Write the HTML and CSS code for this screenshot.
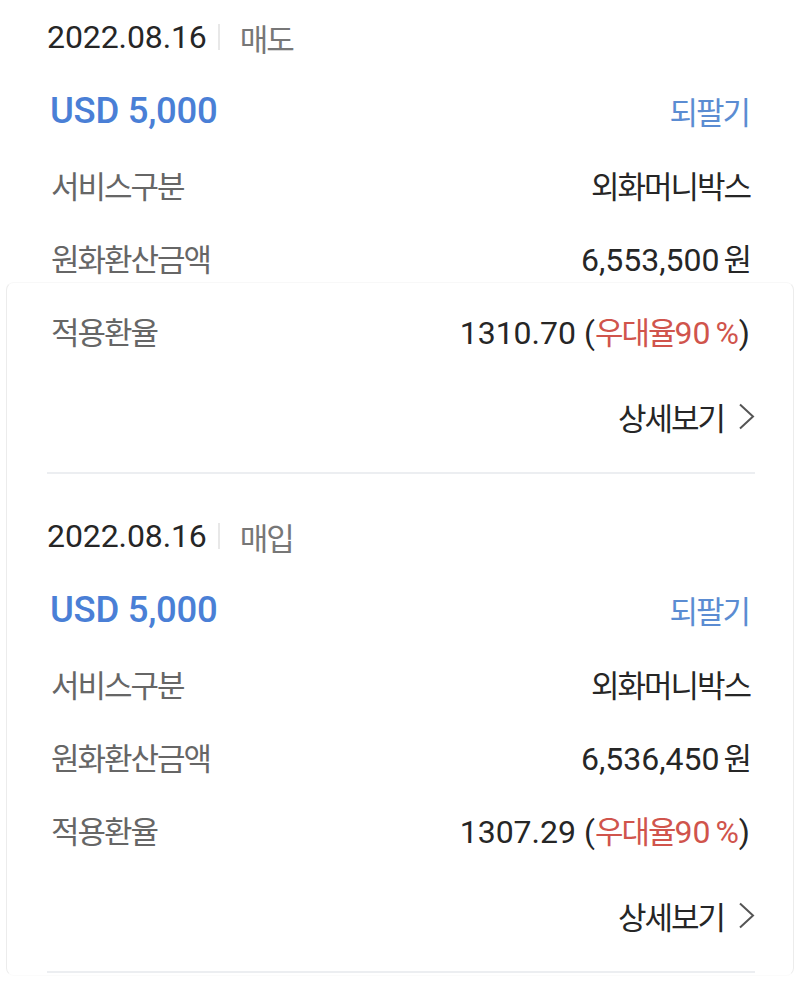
FILE: index.html
```html
<!DOCTYPE html>
<html lang="ko">
<head>
<meta charset="utf-8">
<link rel="stylesheet" href="styles.css">
</head>
<body>
<div class="page">
  <div class="frame"></div>
  <section class="item">
    <div class="head"><span class="date">2022.08.16</span><span class="sep"></span><span class="type ko">매도</span></div>
    <div class="amount-row"><span class="amount">USD 5,000</span><span class="resell ko">되팔기</span></div>
    <div class="row"><span class="label ko">서비스구분</span><span class="value ko">외화머니박스</span></div>
    <div class="row"><span class="label ko">원화환산금액</span><span class="value">6,553,500<span class="ko won">원</span></span></div>
    <div class="row"><span class="label ko">적용환율</span><span class="value">1310.70 (<span class="red"><span class="ko">우대율</span>90<span class="pct">%</span></span>)</span></div>
    <div class="more"><span class="ko">상세보기</span><svg class="chev" width="17" height="27" viewBox="0 0 17 27"><path d="M2 1.5 L15 13.5 L2 25.5" fill="none" stroke="#555" stroke-width="2"/></svg></div>
    <div class="divider"></div>
  </section>
  <section class="item">
    <div class="head"><span class="date">2022.08.16</span><span class="sep"></span><span class="type ko">매입</span></div>
    <div class="amount-row"><span class="amount">USD 5,000</span><span class="resell ko">되팔기</span></div>
    <div class="row"><span class="label ko">서비스구분</span><span class="value ko">외화머니박스</span></div>
    <div class="row"><span class="label ko">원화환산금액</span><span class="value">6,536,450<span class="ko won">원</span></span></div>
    <div class="row"><span class="label ko">적용환율</span><span class="value">1307.29 (<span class="red"><span class="ko">우대율</span>90<span class="pct">%</span></span>)</span></div>
    <div class="more"><span class="ko">상세보기</span><svg class="chev" width="17" height="27" viewBox="0 0 17 27"><path d="M2 1.5 L15 13.5 L2 25.5" fill="none" stroke="#555" stroke-width="2"/></svg></div>
    <div class="divider"></div>
  </section>
</div>
</body>
</html>
```
FILE: styles.css
```css
html, body {
  margin: 0;
  padding: 0;
  background: #ffffff;
}
body {
  font-family: "Roboto", "Noto Sans CJK KR", sans-serif;
  font-size: 32px;
  color: #262626;
  overflow: hidden;
}
.page {
  position: relative;
  width: 800px;
  height: 996px;
}
.frame {
  position: absolute;
  left: 6px;
  top: 282px;
  width: 786px;
  height: 692px;
  border: 1.5px solid #ececec;
  border-top-color: #f8f8f8;
  border-bottom-color: #fbfbfb;
  border-radius: 8px;
  z-index: 0;
}
.item {
  position: relative;
  z-index: 1;
  padding: 25px 45px 0 47px;
}
.item:first-of-type {
  padding-top: 0;
}
.ko {
  font-family: "Noto Sans CJK KR", sans-serif;
  font-size: 31px;
  letter-spacing: -2px;
}
.head {
  height: 74px;
  display: flex;
  align-items: center;
}
.date {
  color: #262626;
  letter-spacing: -0.1px;
}
.sep {
  width: 2px;
  height: 26px;
  background: #e8e8e8;
  margin: 0 20px 0 11px;
}
.type {
  color: #777;
}
.amount-row {
  height: 72px;
  display: flex;
  align-items: center;
  justify-content: space-between;
}
.amount {
  color: #4a7fd6;
  font-weight: 500;
  font-size: 36.5px;
  padding-left: 3px;
  letter-spacing: -0.3px;
}
.resell {
  color: #5b8cd2;
  padding-right: 6px;
}
.row {
  height: 73px;
  display: flex;
  align-items: center;
  justify-content: space-between;
}
.row:nth-of-type(3) {
  margin-top: 2px;
}
.label {
  color: #666;
  padding-left: 4px;
}
.value {
  color: #262626;
  padding-right: 5px;
}
.won {
  margin-left: 4px;
}
.pct {
  margin-left: 5px;
}
.red {
  color: #d0544c;
}
.more {
  height: 98px;
  display: flex;
  align-items: center;
  justify-content: flex-end;
  color: #262626;
}
.chev {
  margin-left: 14px;
}
.divider {
  height: 2px;
  background: #eceef1;
  margin-top: 7px;
}
```
